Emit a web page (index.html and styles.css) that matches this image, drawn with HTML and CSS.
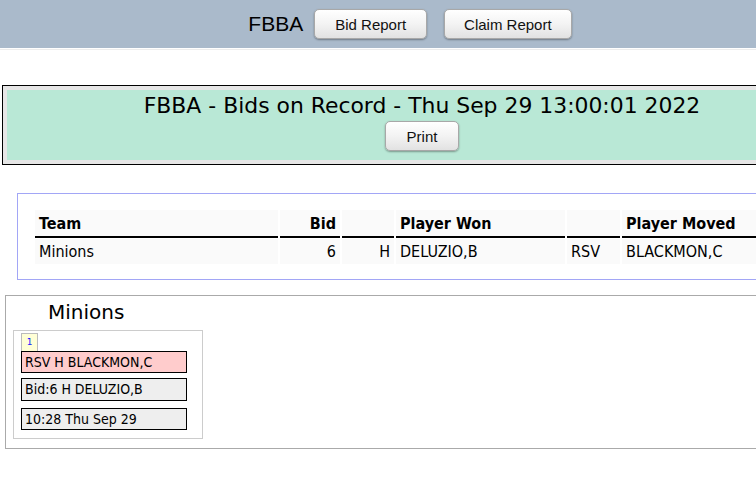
FILE: index.html
```html
<!DOCTYPE html>
<html>
<head>
<meta charset="utf-8">
<link rel="stylesheet" href="styles.css">
</head>
<body>
<div class="page">
  <div class="topbar">
    <span class="brand">FBBA</span>
    <button class="btn btn-bid">Bid Report</button>
    <button class="btn btn-claim">Claim Report</button>
  </div>
  <div class="divider"></div>

  <div class="banner">
    <div class="banner-inner">
      <div class="banner-title">FBBA - Bids on Record - Thu Sep 29 13:00:01 2022</div>
      <button class="btn btn-print">Print</button>
    </div>
  </div>

  <div class="tablebox">
    <table class="bids">
      <thead>
        <tr>
          <th class="c-team">Team</th>
          <th class="c-bid num">Bid</th>
          <th class="c-pos"></th>
          <th class="c-won">Player Won</th>
          <th class="c-act"></th>
          <th class="c-moved">Player Moved</th>
        </tr>
      </thead>
      <tbody>
        <tr>
          <td>Minions</td>
          <td class="num">6</td>
          <td class="num">H</td>
          <td>DELUZIO,B</td>
          <td>RSV</td>
          <td>BLACKMON,C</td>
        </tr>
      </tbody>
    </table>
  </div>

  <div class="teambox">
    <div class="team-name">Minions</div>
    <div class="bidgroup">
      <div class="badge">1</div>
      <div class="card card-red">RSV H BLACKMON,C</div>
      <div class="card card-gray card-bid">Bid:6 H DELUZIO,B</div>
      <div class="card card-gray card-time">10:28 Thu Sep 29</div>
    </div>
  </div>
</div>
</body>
</html>
```

FILE: styles.css
```css
html, body {
  margin: 0;
  padding: 0;
  overflow: hidden;
  background: #fff;
}
.page {
  width: 820px;
  font-family: "DejaVu Sans", Verdana, sans-serif;
  color: #000;
}
.topbar {
  height: 48px;
  background: #aabacb;
  display: flex;
  align-items: center;
  justify-content: center;
}
.brand {
  font-family: "Liberation Sans", Arial, sans-serif;
  font-size: 21px;
  margin-right: 11px;
}
.btn {
  font-family: "Liberation Sans", Arial, sans-serif;
  font-size: 15px;
  color: #111;
  height: 30px;
  padding: 0 19px;
  border: 1px solid #a8a8a8;
  border-radius: 5px;
  background: linear-gradient(#ffffff, #f3f3f3 50%, #e2e2e2);
  box-shadow: 0 1px 2px rgba(0,0,0,0.35);
}
.btn-bid {
  padding: 0 20px;
}
.btn-claim {
  margin-left: 17px;
}
.divider {
  height: 1px;
  margin-top: 1px;
  background: #ededed;
}
.banner {
  margin: 35px 0 0 2px;
  width: 830px;
  border: 1px solid #000;
  padding: 4px;
  background: #e6e6e6;
}
.banner-inner {
  background: #b9e8d6;
  height: 70px;
  display: flex;
  flex-direction: column;
  align-items: center;
}
.banner-title {
  font-family: "DejaVu Sans", Verdana, sans-serif;
  font-size: 21.9px;
  line-height: 28px;
  margin-top: 2px;
}
.btn-print {
  margin-top: 1px;
  padding: 0 21px;
}
.tablebox {
  margin: 28px 0 0 17px;
  width: 820px;
  border: 1px solid #a2a6f6;
  padding: 16px 17px 15px 17px;
}
.bids {
  border-spacing: 2px 0;
  margin-left: -2px;
  font-family: "DejaVu Sans Condensed", "DejaVu Sans", sans-serif;
  font-size: 16px;
}
.bids th, .bids td {
  background: #fafafa;
  padding: 0 4px;
  text-align: left;
}
.bids th {
  height: 25px;
  border-bottom: 2px solid #000;
  font-weight: bold;
  padding-top: 1px;
}
.bids td {
  height: 25px;
}
.bids tbody tr td {
  border-top: 1px solid #fff;
}
.bids .num {
  text-align: right;
}
.c-team { width: 235px; }
.c-bid { width: 52px; }
.c-pos { width: 44px; }
.c-won { width: 161px; }
.c-act { width: 45px; }
.c-moved { width: 160px; }
.teambox {
  margin: 15px 0 0 5px;
  width: 820px;
  border: 1px solid #aaa;
  padding: 4px 7px 9px 7px;
}
.team-name {
  font-size: 20px;
  margin-left: 35px;
  line-height: 24px;
  margin-bottom: 6px;
}
.bidgroup {
  width: 166px;
  border: 1px solid #ccc;
  padding: 2px 15px 8px 7px;
}
.badge {
  width: 15px;
  height: 17px;
  border: 1px solid #bbb;
  border-bottom: none;
  background: #ffffd6;
  color: #22f;
  font-size: 9px;
  text-align: center;
  line-height: 17px;
}
.card {
  border: 1px solid #000;
  font-family: "DejaVu Sans Condensed", "DejaVu Sans", sans-serif;
  font-size: 14px;
  height: 20px;
  line-height: 20px;
  padding-left: 3px;
}
.card-red { background: #ffcccc; }
.card-gray { background: #eeeeee; }
.card-bid { margin-top: 5px; height: 21px; line-height: 21px; }
.card-time { margin-top: 7px; }
```
